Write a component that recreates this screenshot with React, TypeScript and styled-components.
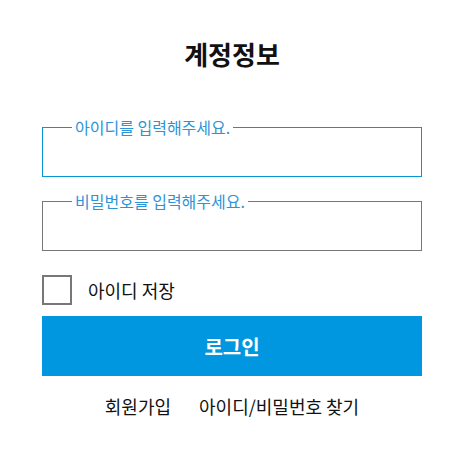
import React from 'react';
import styled, { createGlobalStyle } from 'styled-components';

const GlobalStyle = createGlobalStyle`
  html, body { margin: 0; padding: 0; background: #fff; }
  body {
    font-family: "Noto Sans CJK KR", "Noto Sans", sans-serif;
    color: #111;
  }
`;

/* ── Page ── */
const Page = styled.div`
  width: 380px;
  margin-left: 42px;
  padding-top: 36px;
  display: flex;
  flex-direction: column;
`;

const Title = styled.h1`
  margin: 0 0 46px;
  text-align: center;
  font-size: 26px;
  line-height: 36px;
  font-weight: 700;
  color: #111;
`;

/* ── Fields: fieldset with floating legend ── */
const Field = styled.fieldset<{ $active?: boolean }>`
  margin: 0 0 15px;
  padding: 0 29px;
  border: 1px solid ${({ $active }) => ($active ? '#0a95d8' : '#777')};
  min-width: 0;
`;

const Legend = styled.legend`
  padding: 0 3px;
  font-size: 16px;
  line-height: 18px;
  color: #2c94d6;
`;

const Input = styled.input`
  display: block;
  width: 100%;
  height: 40px;
  border: 0;
  outline: none;
  padding: 0;
  font: inherit;
  background: transparent;
`;

/* ── Remember id ── */
const CheckRow = styled.label`
  display: flex;
  align-items: center;
  gap: 16px;
  margin-top: 9px;
  height: 30px;
  font-size: 18px;
  color: #111;
`;

const CheckBox = styled.span`
  width: 30px;
  height: 30px;
  box-sizing: border-box;
  border: 2px solid #777;
  flex-shrink: 0;
`;

const LoginBtn = styled.button`
  margin-top: 11px;
  height: 60px;
  border: 0;
  background: #0096e0;
  color: #fff;
  font-family: inherit;
  font-size: 20px;
  font-weight: 700;
  cursor: pointer;
`;

const Links = styled.div`
  display: flex;
  justify-content: center;
  gap: 28px;
  margin-top: 18px;
  font-size: 18px;
  line-height: 24px;
`;

const LinkText = styled.a`
  color: #111;
  text-decoration: none;
`;

export default function App() {
  return (
    <>
      <GlobalStyle />
      <Page>
        <Title>계정정보</Title>

        <Field $active>
          <Legend>아이디를 입력해주세요.</Legend>
          <Input type="text" />
        </Field>

        <Field>
          <Legend>비밀번호를 입력해주세요.</Legend>
          <Input type="password" />
        </Field>

        <CheckRow>
          <CheckBox />
          아이디 저장
        </CheckRow>

        <LoginBtn>로그인</LoginBtn>

        <Links>
          <LinkText>회원가입</LinkText>
          <LinkText>아이디/비밀번호 찾기</LinkText>
        </Links>
      </Page>
    </>
  );
}
